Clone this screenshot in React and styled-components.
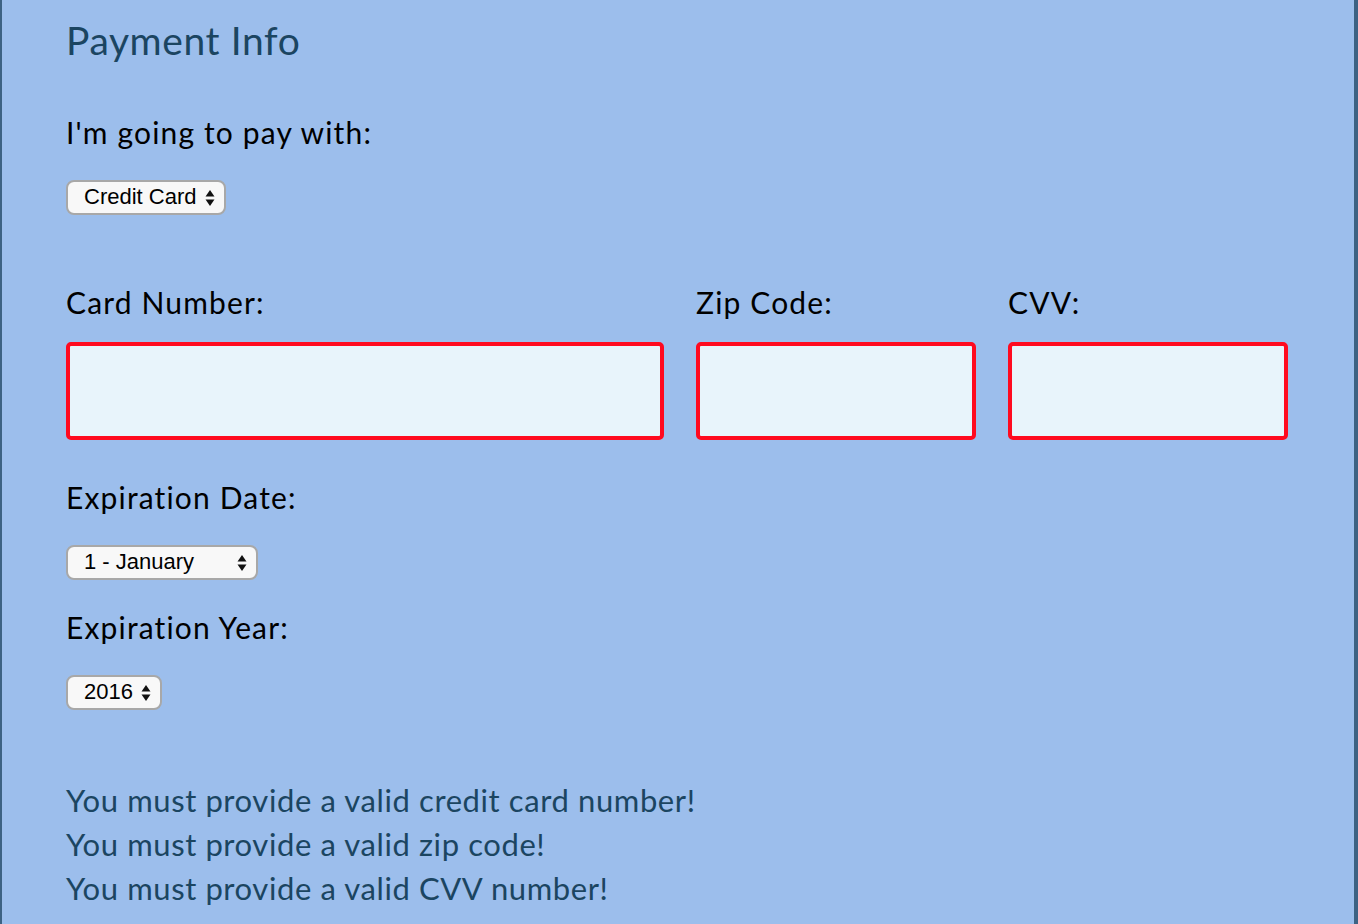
import React from "react";
import styled, { createGlobalStyle } from "styled-components";

const Global = createGlobalStyle`
  html, body { margin: 0; padding: 0; background: #9cbeec; }
  body { font-family: "Lato", "Open Sans", sans-serif; }
`;

const Page = styled.div`
  box-sizing: border-box;
  min-height: 924px;
  background: #9cbeec;
  border-left: 2px solid #3d6283;
  border-right: 4px solid #3d6283;
  padding: 0 64px 0 64px;
`;

const Title = styled.h2`
  margin: 0;
  padding-top: 17px;
  height: 46px;
  font-size: 39px;
  letter-spacing: 0.6px;
  font-weight: 400;
  line-height: 46px;
  color: #1b4561;
`;

const Label = styled.label`
  display: block;
  font-size: 30px;
  letter-spacing: 1.15px;
  line-height: 36px;
  color: #000;
  margin-top: ${(p) => p.$mt || 0}px;
`;

const SelectBox = styled.div`
  box-sizing: border-box;
  display: flex;
  align-items: center;
  justify-content: space-between;
  width: ${(p) => p.$w}px;
  height: 35px;
  margin-top: ${(p) => p.$mt || 0}px;
  padding: 0 9px 2px 16px;
  background: #f8f8f8;
  border: 2px solid #a8a8a8;
  border-radius: 8px;
  font-family: "Liberation Sans", Arial, sans-serif;
  font-size: 22px;
  color: #000;
`;

const Arrows = styled.svg`
  width: 10px;
  height: 20px;
  flex: none;
  margin-top: 2px;
`;

const FieldRow = styled.div`
  display: grid;
  grid-template-columns: 598px 280px 280px;
  column-gap: 32px;
  margin-top: 69px;
`;

const Field = styled.div`
  display: flex;
  flex-direction: column;
`;

const Input = styled.div`
  box-sizing: border-box;
  height: 98px;
  margin-top: 22px;
  background: #e8f4fb;
  border: 4px solid #ff0a1f;
  border-radius: 5px;
`;

const Errors = styled.div`
  margin-top: 68px;
`;

const ErrorLine = styled.p`
  margin: 0;
  font-size: 31px;
  letter-spacing: 0.6px;
  line-height: 44px;
  color: #1b4561;
`;

const Select = ({ w, mt, children }) => (
  <SelectBox $w={w} $mt={mt}>
    <span>{children}</span>
    <Arrows viewBox="0 0 10 20">
      <path d="M5 2 L9.5 8.5 L0.5 8.5 Z" fill="#111" />
      <path d="M5 18 L9.5 11.5 L0.5 11.5 Z" fill="#111" />
    </Arrows>
  </SelectBox>
);

export default function App() {
  return (
    <>
      <Global />
      <Page>
        <Title>Payment Info</Title>
        <Label $mt={51}>I'm going to pay with:</Label>
        <Select w={160} mt={30}>Credit Card</Select>
        <FieldRow>
          <Field>
            <Label>Card Number:</Label>
            <Input />
          </Field>
          <Field>
            <Label>Zip Code:</Label>
            <Input />
          </Field>
          <Field>
            <Label>CVV:</Label>
            <Input />
          </Field>
        </FieldRow>
        <Label $mt={39}>Expiration Date:</Label>
        <Select w={192} mt={30}>1 - January</Select>
        <Label $mt={29}>Expiration Year:</Label>
        <Select w={96} mt={30}>2016</Select>
        <Errors>
          <ErrorLine>You must provide a valid credit card number!</ErrorLine>
          <ErrorLine>You must provide a valid zip code!</ErrorLine>
          <ErrorLine>You must provide a valid CVV number!</ErrorLine>
        </Errors>
      </Page>
    </>
  );
}
